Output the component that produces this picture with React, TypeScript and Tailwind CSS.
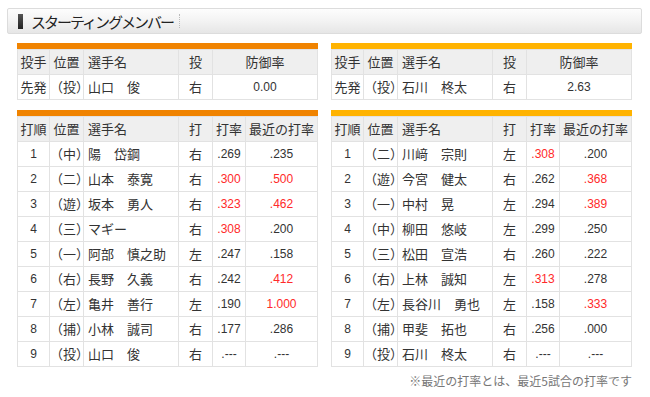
import React from "react";

type Batter = { no: number; pos: string; name: string; hand: string; avg: string; recent: string; avgHot?: boolean; recentHot?: boolean };

type Side = {
  bar: string;
  pitcher: { name: string; hand: string; era: string };
  batters: Batter[];
};

const home: Side = {
  bar: "bg-[#f08300]",
  pitcher: { name: "山口　俊", hand: "右", era: "0.00" },
  batters: [
    { no: 1, pos: "（中）", name: "陽　岱鋼", hand: "右", avg: ".269", recent: ".235" },
    { no: 2, pos: "（二）", name: "山本　泰寛", hand: "右", avg: ".300", recent: ".500", avgHot: true, recentHot: true },
    { no: 3, pos: "（遊）", name: "坂本　勇人", hand: "右", avg: ".323", recent: ".462", avgHot: true, recentHot: true },
    { no: 4, pos: "（三）", name: "マギー", hand: "右", avg: ".308", recent: ".200", avgHot: true },
    { no: 5, pos: "（一）", name: "阿部　慎之助", hand: "左", avg: ".247", recent: ".158" },
    { no: 6, pos: "（右）", name: "長野　久義", hand: "右", avg: ".242", recent: ".412", recentHot: true },
    { no: 7, pos: "（左）", name: "亀井　善行", hand: "左", avg: ".190", recent: "1.000", recentHot: true },
    { no: 8, pos: "（捕）", name: "小林　誠司", hand: "右", avg: ".177", recent: ".286" },
    { no: 9, pos: "（投）", name: "山口　俊", hand: "右", avg: ".---", recent: ".---" },
  ],
};

const away: Side = {
  bar: "bg-[#ffb300]",
  pitcher: { name: "石川　柊太", hand: "右", era: "2.63" },
  batters: [
    { no: 1, pos: "（二）", name: "川﨑　宗則", hand: "左", avg: ".308", recent: ".200", avgHot: true },
    { no: 2, pos: "（遊）", name: "今宮　健太", hand: "右", avg: ".262", recent: ".368", recentHot: true },
    { no: 3, pos: "（一）", name: "中村　晃", hand: "左", avg: ".294", recent: ".389", recentHot: true },
    { no: 4, pos: "（中）", name: "柳田　悠岐", hand: "左", avg: ".299", recent: ".250" },
    { no: 5, pos: "（三）", name: "松田　宣浩", hand: "右", avg: ".260", recent: ".222" },
    { no: 6, pos: "（右）", name: "上林　誠知", hand: "左", avg: ".313", recent: ".278", avgHot: true },
    { no: 7, pos: "（左）", name: "長谷川　勇也", hand: "左", avg: ".158", recent: ".333", recentHot: true },
    { no: 8, pos: "（捕）", name: "甲斐　拓也", hand: "右", avg: ".256", recent: ".000" },
    { no: 9, pos: "（投）", name: "石川　柊太", hand: "右", avg: ".---", recent: ".---" },
  ],
};

const th = "h-[25px] border border-[#e2e2e2] bg-[#efefef] font-normal text-[#333] p-0";
const td = "h-[25px] border border-[#e2e2e2] bg-white text-[#333] p-0";
const num = "font-['Liberation_Sans','Noto_Sans_CJK_JP',sans-serif] text-[12px]";

function Cols() {
  return (
    <colgroup>
      <col className="w-[32px]" />
      <col className="w-[34px]" />
      <col className="w-[95px]" />
      <col className="w-[34px]" />
      <col className="w-[33px]" />
      <col className="w-[72px]" />
    </colgroup>
  );
}

function TeamTables({ side }: { side: Side }) {
  return (
    <div className="w-[301px]">
      <div className={`h-[6px] ${side.bar}`} />
      <table className="w-full table-fixed border-collapse">
        <Cols />
        <thead>
          <tr>
            <th className={th}>投手</th>
            <th className={th}>位置</th>
            <th className={`${th} text-left pl-[4px]`}>選手名</th>
            <th className={th}>投</th>
            <th className={th} colSpan={2}>防御率</th>
          </tr>
        </thead>
        <tbody>
          <tr>
            <td className={`${td} text-center`}>先発</td>
            <td className={`${td} text-center`}>（投）</td>
            <td className={`${td} pl-[4px] text-[#1f6eb0]`}>{side.pitcher.name}</td>
            <td className={`${td} text-center`}>{side.pitcher.hand}</td>
            <td className={`${td} ${num} text-center`} colSpan={2}>{side.pitcher.era}</td>
          </tr>
        </tbody>
      </table>

      <div className={`mt-[10px] h-[6px] ${side.bar}`} />
      <table className="w-full table-fixed border-collapse">
        <Cols />
        <thead>
          <tr>
            <th className={th}>打順</th>
            <th className={th}>位置</th>
            <th className={`${th} text-left pl-[4px]`}>選手名</th>
            <th className={th}>打</th>
            <th className={th}>打率</th>
            <th className={th}>最近の打率</th>
          </tr>
        </thead>
        <tbody>
          {side.batters.map((b) => (
            <tr key={b.no}>
              <td className={`${td} ${num} text-center`}>{b.no}</td>
              <td className={`${td} text-center`}>{b.pos}</td>
              <td className={`${td} pl-[4px] text-[#1f6eb0] whitespace-nowrap`}>{b.name}</td>
              <td className={`${td} text-center`}>{b.hand}</td>
              <td className={`${td} ${num} text-center ${b.avgHot ? "text-[#ff2a2a]" : ""}`}>{b.avg}</td>
              <td className={`${td} ${num} text-center ${b.recentHot ? "text-[#ff2a2a]" : ""}`}>{b.recent}</td>
            </tr>
          ))}
        </tbody>
      </table>
    </div>
  );
}

export default function App() {
  return (
    <div className="w-[650px] h-[397px] bg-white font-['Noto_Sans_CJK_JP',sans-serif] text-[13px] text-[#333] overflow-hidden">
      <div className="pt-[8px] pl-[7px] pr-[8px]">
        <div className="h-[26px] flex items-center rounded-[2px] border border-[#dcdcdc] bg-gradient-to-b from-[#fdfdfd] via-[#f3f3f3] to-[#e6e6e6]">
          <span className="ml-[10px] w-[5px] h-[15px] bg-gradient-to-b from-[#555] to-[#222]" />
          <span className="ml-[8px] text-[15px] leading-none text-[#222] tracking-[-2px]">スターティングメンバー</span>
          <span className="ml-[6px] h-[14px] border-l border-dotted border-[#bbb]" />
        </div>
      </div>

      <div className="mt-[9px] pl-[17px] flex gap-[13px]">
        <TeamTables side={home} />
        <TeamTables side={away} />
      </div>

      <div className="mt-[5px] w-[632px] text-right text-[12px] text-[#777]">
        ※最近の打率とは、最近5試合の打率です
      </div>
    </div>
  );
}
